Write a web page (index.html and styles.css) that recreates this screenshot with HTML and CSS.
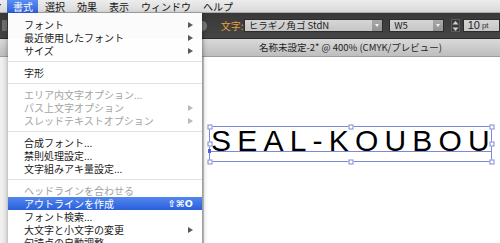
FILE: index.html
```html
<!DOCTYPE html>
<html lang="ja">
<head>
<meta charset="utf-8">
<title>書式メニュー</title>
<link rel="stylesheet" href="styles.css">
</head>
<body>
<div class="app">
  <div class="menubar">
    <span class="app-name">r</span>
    <span class="mb-item active">書式</span>
    <span class="mb-item">選択</span>
    <span class="mb-item">効果</span>
    <span class="mb-item">表示</span>
    <span class="mb-item">ウィンドウ</span>
    <span class="mb-item">ヘルプ</span>
  </div>

  <div class="toolbar">
    <span class="tool-box"></span>
    <span class="tool-circle"></span>
    <span class="char-label">文字:</span>
    <span class="field field-font">
      <span class="field-text">ヒラギノ角ゴ StdN</span>
      <span class="drop"><span class="drop-arrow"></span></span>
    </span>
    <span class="field field-weight">
      <span class="field-text">W5</span>
      <span class="drop"><span class="drop-arrow"></span></span>
    </span>
    <span class="stepper">
      <svg width="7" height="12" viewBox="0 0 7 12"><path d="M3.5 1 L6.5 4.5 L0.5 4.5 Z" fill="#cfcfcf"/><path d="M3.5 11 L6.5 7.5 L0.5 7.5 Z" fill="#cfcfcf"/></svg>
    </span>
    <span class="field field-size"><span class="size-num">10</span><span class="size-unit">pt</span></span>
  </div>

  <div class="tabbar">
    <div class="tab-spacer"></div>
    <div class="tab-title">名称未設定-2* @ 400% (CMYK/プレビュー)</div>
  </div>

  <div class="main">
    <div class="side"></div>
    <div class="canvas">
      <div class="selection">
        <div class="art-text">SEAL-KOUBOU</div>
        <span class="baseline"></span>
        <span class="anchor"></span>
        <span class="handle h-tl"></span>
        <span class="handle h-tc"></span>
        <span class="handle h-tr"></span>
        <span class="handle h-ml"></span>
        <span class="handle h-mr"></span>
        <span class="handle h-bl"></span>
        <span class="handle h-bc"></span>
        <span class="handle h-br"></span>
      </div>
    </div>
  </div>

  <div class="menu">
    <div class="mi"><span>フォント</span><span class="sub"></span></div>
    <div class="mi"><span>最近使用したフォント</span><span class="sub"></span></div>
    <div class="mi"><span>サイズ</span><span class="sub"></span></div>
    <div class="sep"></div>
    <div class="mi"><span>字形</span></div>
    <div class="sep"></div>
    <div class="mi disabled"><span>エリア内文字オプション...</span></div>
    <div class="mi disabled"><span>パス上文字オプション</span><span class="sub"></span></div>
    <div class="mi disabled"><span>スレッドテキストオプション</span><span class="sub"></span></div>
    <div class="sep"></div>
    <div class="mi"><span>合成フォント...</span></div>
    <div class="mi"><span>禁則処理設定...</span></div>
    <div class="mi"><span>文字組みアキ量設定...</span></div>
    <div class="sep"></div>
    <div class="mi disabled"><span>ヘッドラインを合わせる</span></div>
    <div class="mi selected"><span>アウトラインを作成</span><span class="shortcut">⇧⌘O</span></div>
    <div class="mi"><span>フォント検索...</span></div>
    <div class="mi"><span>大文字と小文字の変更</span><span class="sub"></span></div>
    <div class="mi"><span>句読点の自動調整</span></div>
  </div>
</div>
</body>
</html>
```

FILE: styles.css
```css
* { box-sizing: border-box; }

html, body {
  margin: 0;
  padding: 0;
}

body {
  width: 500px;
  height: 243px;
  overflow: hidden;
  font-family: "Noto Sans CJK JP", "Liberation Sans", sans-serif;
  background: #ffffff;
}

.app {
  position: relative;
  width: 500px;
  height: 243px;
  display: flex;
  flex-direction: column;
  overflow: hidden;
}

/* ---------- menu bar ---------- */
.menubar {
  height: 13px;
  flex: none;
  display: flex;
  align-items: center;
  background: linear-gradient(#ededed, #d9d9d9);
  border-bottom: 1px solid #a9a9a9;
  font-size: 10px;
  line-height: 13px;
  color: #111;
}

.app-name {
  margin-left: -3px;
  font-family: "Liberation Sans", sans-serif;
  font-weight: bold;
  font-size: 10px;
  width: 6px;
}

.mb-item {
  padding: 0 6px;
  height: 13px;
}

.mb-item.active {
  margin-left: 4px;
  padding: 0 5px 0 6px;
  margin-right: 1px;
  color: #fff;
  background: linear-gradient(#5b8df0, #2d60dc);
}

/* ---------- toolbar ---------- */
.toolbar {
  height: 26px;
  flex: none;
  display: flex;
  align-items: center;
  background: linear-gradient(#393939, #454545);
  border-bottom: 1px solid #2b2b2b;
}

.tool-box {
  margin-left: 2px;
  width: 5px;
  height: 11px;
  background: #707070;
  border-radius: 1px;
}

.tool-circle {
  margin-left: 191px;
  width: 10px;
  height: 10px;
  border-radius: 50%;
  background: #7a7a7a;
}

.char-label {
  margin-left: 14px;
  font-size: 10px;
  color: #e3a23a;
  width: 25px;
}

.field {
  height: 13px;
  display: flex;
  align-items: center;
  background: linear-gradient(#d6d6d6, #c6c6c6);
  border: 1px solid #2c2c2c;
  color: #222;
  font-size: 9.5px;
  line-height: 11px;
  overflow: hidden;
}

.field-font {
  width: 151px;
}

.field-weight {
  margin-left: 6px;
  width: 59px;
}

.field-text {
  flex: 1;
  padding-left: 4px;
  white-space: nowrap;
}

.drop {
  width: 10px;
  height: 11px;
  background: linear-gradient(#a9a9a9, #939393);
  display: flex;
  align-items: center;
  justify-content: center;
}

.drop-arrow {
  width: 0;
  height: 0;
  border-left: 2.5px solid transparent;
  border-right: 2.5px solid transparent;
  border-top: 3px solid #f2f2f2;
}

.stepper {
  margin-left: 7px;
  width: 9px;
  height: 13px;
  display: flex;
  align-items: center;
  justify-content: center;
  border: 1px solid #5a5a5a;
  background: #3a3a3a;
}

.field-size {
  margin-left: 3px;
  width: 40px;
  font-family: "Liberation Sans", sans-serif;
  padding-left: 4px;
}

.size-num {
  font-size: 11px;
  color: #1d1d1d;
}

.size-unit {
  margin-left: 2px;
  font-size: 8px;
  color: #333;
}

/* ---------- document tab bar ---------- */
.tabbar {
  height: 18px;
  flex: none;
  display: flex;
  background: linear-gradient(#d9d9d9, #bebebe);
  border-bottom: 1px solid #9c9c9c;
}

.tab-spacer {
  width: 201px;
  flex: none;
}

.tab-title {
  flex: 1;
  text-align: center;
  font-size: 9.5px;
  line-height: 17px;
  color: #1e1e1e;
  white-space: nowrap;
}

/* ---------- work area ---------- */
.main {
  flex: 1;
  display: flex;
}

.side {
  width: 201px;
  flex: none;
  background: #f0f0f0;
}

.canvas {
  flex: 1;
  position: relative;
  background: #ffffff;
  border-left: 3px solid #d2d2d2;
}

.selection {
  position: absolute;
  left: 5px;
  top: 69px;
  width: 283px;
  height: 36px;
  border: 1px solid #7c89d6;
}

.art-text {
  font-family: "Liberation Sans", Arial, sans-serif;
  font-size: 30px;
  line-height: 26px;
  padding-top: 1px;
  padding-left: 1px;
  letter-spacing: 6.2px;
  color: #000;
  white-space: nowrap;
}

.baseline {
  position: absolute;
  left: 0;
  right: 0;
  top: 24px;
  height: 1px;
  background: #7c89d6;
}

.anchor {
  position: absolute;
  left: -2px;
  top: 22px;
  width: 3px;
  height: 4px;
  background: #4a63d8;
}

.handle {
  position: absolute;
  width: 5px;
  height: 5px;
  background: #fff;
  border: 1px solid #7c89d6;
  transform: translate(-50%, -50%);
}

.h-tl { left: -0.5px; top: -0.5px; }
.h-tc { left: 50%; top: -0.5px; }
.h-tr { left: calc(100% + 0.5px); top: -0.5px; }
.h-ml { left: -0.5px; top: 50%; }
.h-mr { left: calc(100% + 0.5px); top: 50%; }
.h-bl { left: -0.5px; top: calc(100% + 0.5px); }
.h-bc { left: 50%; top: calc(100% + 0.5px); }
.h-br { left: calc(100% + 0.5px); top: calc(100% + 0.5px); }

/* ---------- dropdown menu ---------- */
.menu {
  position: absolute;
  left: 8px;
  top: 13px;
  width: 194px;
  height: 240px;
  padding-top: 5px;
  background: rgba(255, 255, 255, 0.98);
  box-shadow: 0 3px 6px rgba(0, 0, 0, 0.35), 1px 0 2px rgba(0, 0, 0, 0.15);
  font-size: 10px;
  color: #1a1a1a;
}

.mi {
  height: 13px;
  line-height: 13px;
  padding: 0 9px 0 16px;
  display: flex;
  align-items: center;
  justify-content: space-between;
  white-space: nowrap;
}

.mi.disabled {
  color: #a3a3a3;
}

.mi.selected {
  color: #fff;
  background: linear-gradient(#5287ef, #2b5fdc);
}

.sub {
  width: 0;
  height: 0;
  border-top: 3.5px solid transparent;
  border-bottom: 3.5px solid transparent;
  border-left: 5px solid #5a5a5a;
}

.mi.disabled .sub {
  border-left-color: #b9b9b9;
}

.shortcut {
  font-family: "DejaVu Sans", sans-serif;
  font-weight: bold;
  font-size: 9.5px;
  letter-spacing: 0.2px;
}

.sep {
  height: 9px;
  display: flex;
  align-items: center;
}

.sep::before {
  content: "";
  display: block;
  width: 100%;
  height: 1px;
  background: #e1e1e1;
}
```
